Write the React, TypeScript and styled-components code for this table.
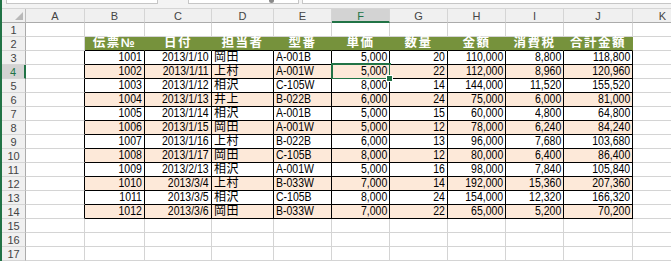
import React from "react"
import styled, { createGlobalStyle, css } from "styled-components"

const GlobalStyle = createGlobalStyle`
html, body {
margin: 0;
padding: 0;
background: #ffffff;
overflow: hidden;
}
* {
box-sizing: border-box;
}
`

const columns = ["A", "B", "C", "D", "E", "F", "G", "H", "I", "J", "K"]
const widths = [59, 60, 67, 62, 58, 58, 58, 58, 58, 69, 60]

const heads = ["伝票№", "日付", "担当者", "型番", "単価", "数量", "金額", "消費税", "合計金額"]

const rows = [
    ["1001", "2013/1/10", "岡田", "A-001B", "5,000", "20", "110,000", "8,800", "118,800"],
    ["1002", "2013/1/11", "上村", "A-001W", "5,000", "22", "112,000", "8,960", "120,960"],
    ["1003", "2013/1/12", "相沢", "C-105W", "8,000", "14", "144,000", "11,520", "155,520"],
    ["1004", "2013/1/13", "井上", "B-022B", "6,000", "24", "75,000", "6,000", "81,000"],
    ["1005", "2013/1/14", "相沢", "A-001B", "5,000", "15", "60,000", "4,800", "64,800"],
    ["1006", "2013/1/15", "岡田", "A-001W", "5,000", "12", "78,000", "6,240", "84,240"],
    ["1007", "2013/1/16", "上村", "B-022B", "6,000", "13", "96,000", "7,680", "103,680"],
    ["1008", "2013/1/17", "岡田", "C-105B", "8,000", "12", "80,000", "6,400", "86,400"],
    ["1009", "2013/2/13", "相沢", "A-001W", "5,000", "16", "98,000", "7,840", "105,840"],
    ["1010", "2013/3/4", "上村", "B-033W", "7,000", "14", "192,000", "15,360", "207,360"],
    ["1011", "2013/3/5", "相沢", "C-105B", "8,000", "24", "154,000", "12,320", "166,320"],
    ["1012", "2013/3/6", "岡田", "B-033W", "7,000", "22", "65,000", "5,200", "70,200"]
]

// columns holding text (left aligned, names and codes)
const leftCols = [2, 3]

export default function App() {
    const totalRows = 17

    const renderRow = (r: number) => {
        const cells: React.ReactNode[] = []
        cells.push(
            <RowHead key={`rh${r}`} $active={r === 4}>{r}</RowHead>
        )
        columns.forEach((_, c) => {
            const key = `${r}-${c}`
            // c: 0 = A, 1..9 = B..J, 10 = K
            const inTable = c >= 1 && c <= 9
            if (r === 2 && inTable) {
                cells.push(<HeadCell key={key}>{heads[c - 1]}</HeadCell>)
                return
            }
            if (r >= 3 && r <= 14 && inTable) {
                const value = rows[r - 3][c - 1]
                const left = leftCols.includes(c - 1)
                const isName = c - 1 === 2
                cells.push(
                    <DataCell
                        key={key}
                        $alt={r % 2 === 0}
                        $left={left}
                        $selected={r === 4 && c === 5}
                    >
                        {isName ? <Name>{value}</Name> : <Narrow $left={left}>{value}</Narrow>}
                    </DataCell>
                )
                return
            }
            cells.push(<Cell key={key} $edgeRight={c === 0 && r >= 3 && r <= 14} />)
        })
        return cells
    }

    return (
        <Page>
            <GlobalStyle />
            <Edge />
            <Main>
                <TopBar>
                    <NameBox />
                    <FormulaTools>
                        <ToolGlyph />
                    </FormulaTools>
                    <FormulaBox />
                </TopBar>
                <Sheet>
                    <Corner />
                    {columns.map((col) => (
                        <ColHead key={col} $active={col === "F"}>{col}</ColHead>
                    ))}
                    {Array.from({ length: totalRows }, (_, i) => renderRow(i + 1))}
                </Sheet>
            </Main>
        </Page>
    )
}

const Page = styled.div`
display: flex;
width: 671px;
height: 261px;
overflow: hidden;
background: #ffffff;
font-family: "Liberation Sans", "Noto Sans CJK JP", sans-serif;
`

const Edge = styled.div`
width: 2px;
flex-shrink: 0;
background: #217346;
`

const Main = styled.div`
display: flex;
flex-direction: column;
flex-shrink: 0;
`

const TopBar = styled.div`
height: 14px;
display: flex;
align-items: flex-start;
gap: 3px;
padding-left: 4px;
background: #f3f3f3;
border-bottom: 1px solid #d5d5d5;
`

const BoxBase = css`
height: 4px;
background: #ffffff;
border: 1px solid #c6c6c6;
border-top: none;
`

const NameBox = styled.div`
${BoxBase};
width: 152px;
margin-right: 27px;
`

const FormulaTools = styled.div`
${BoxBase};
width: 111px;
position: relative;
`

const ToolGlyph = styled.div`
position: absolute;
right: 24px;
top: -2px;
width: 5px;
height: 5px;
border-radius: 50%;
background: #8a8a8a;
`

const FormulaBox = styled.div`
${BoxBase};
width: 400px;
border-right: none;
`

const Sheet = styled.div`
display: grid;
grid-template-columns: 24px ${widths.map((w) => `${w}px`).join(" ")};
grid-template-rows: 14px;
grid-auto-rows: 14px;
`

const Corner = styled.div`
position: relative;
background: #f0f0f0;
border-right: 1px solid #bdbdbd;
border-bottom: 1px solid #ababab;
&::after {
content: "";
position: absolute;
right: 2px;
bottom: 2px;
width: 0;
height: 0;
border-left: 8px solid transparent;
border-bottom: 8px solid #b9b9b9;
}
`

const ColHead = styled.div<{ $active?: boolean }>`
display: flex;
align-items: center;
justify-content: center;
font-size: 11px;
line-height: 12px;
color: ${(p) => (p.$active ? "#217346" : "#444444")};
background: ${(p) => (p.$active ? "#d3d3d3" : "#f0f0f0")};
border-right: 1px solid #d5d5d5;
border-bottom: ${(p) => (p.$active ? "2px solid #217346" : "1px solid #ababab")};
padding-top: 1px;
`

const RowHead = styled.div<{ $active?: boolean }>`
display: flex;
align-items: center;
justify-content: center;
font-size: 11px;
line-height: 12px;
color: ${(p) => (p.$active ? "#217346" : "#444444")};
background: ${(p) => (p.$active ? "#d3d3d3" : "#f0f0f0")};
border-right: ${(p) => (p.$active ? "2px solid #217346" : "1px solid #ababab")};
border-bottom: 1px solid #d5d5d5;
padding-top: 1px;
`

const Cell = styled.div<{ $edgeRight?: boolean }>`
background: #ffffff;
border-right: 1px solid ${(p) => (p.$edgeRight ? "#000000" : "#d4d4d4")};
border-bottom: 1px solid #d4d4d4;
`

const HeadCell = styled.div`
display: flex;
align-items: center;
justify-content: center;
background: #76923c;
color: #ffffff;
font-family: "Liberation Sans", "Noto Sans CJK JP", sans-serif;
font-weight: 700;
font-size: 12.5px;
line-height: 13px;
letter-spacing: 1.5px;
border-right: 1px solid #76923c;
border-bottom: 1px solid #000000;
white-space: nowrap;
`

const DataCell = styled.div<{ $alt?: boolean; $left?: boolean; $selected?: boolean }>`
position: relative;
display: flex;
align-items: center;
justify-content: ${(p) => (p.$left ? "flex-start" : "flex-end")};
padding: 0 2px;
background: ${(p) => (p.$alt ? "#fde9d9" : "#ffffff")};
border-right: 1px solid #000000;
border-bottom: 1px solid #000000;
color: #000000;
line-height: 13px;
white-space: nowrap;
${(p) =>
    p.$selected &&
    css`
&::after {
content: "";
position: absolute;
left: -1px;
top: -2px;
right: -2px;
bottom: -2px;
border: 2px solid #217346;
pointer-events: none;
}
&::before {
content: "";
position: absolute;
right: -4px;
bottom: -4px;
width: 5px;
height: 5px;
background: #217346;
border: 1px solid #ffffff;
z-index: 1;
}
`}
`

const Narrow = styled.span<{ $left?: boolean }>`
display: inline-block;
font-size: 12.5px;
letter-spacing: 0;
transform: scaleX(0.84);
transform-origin: ${(p) => (p.$left ? "left center" : "right center")};
`

const Name = styled.span`
font-size: 12px;
letter-spacing: 0.5px;
`
